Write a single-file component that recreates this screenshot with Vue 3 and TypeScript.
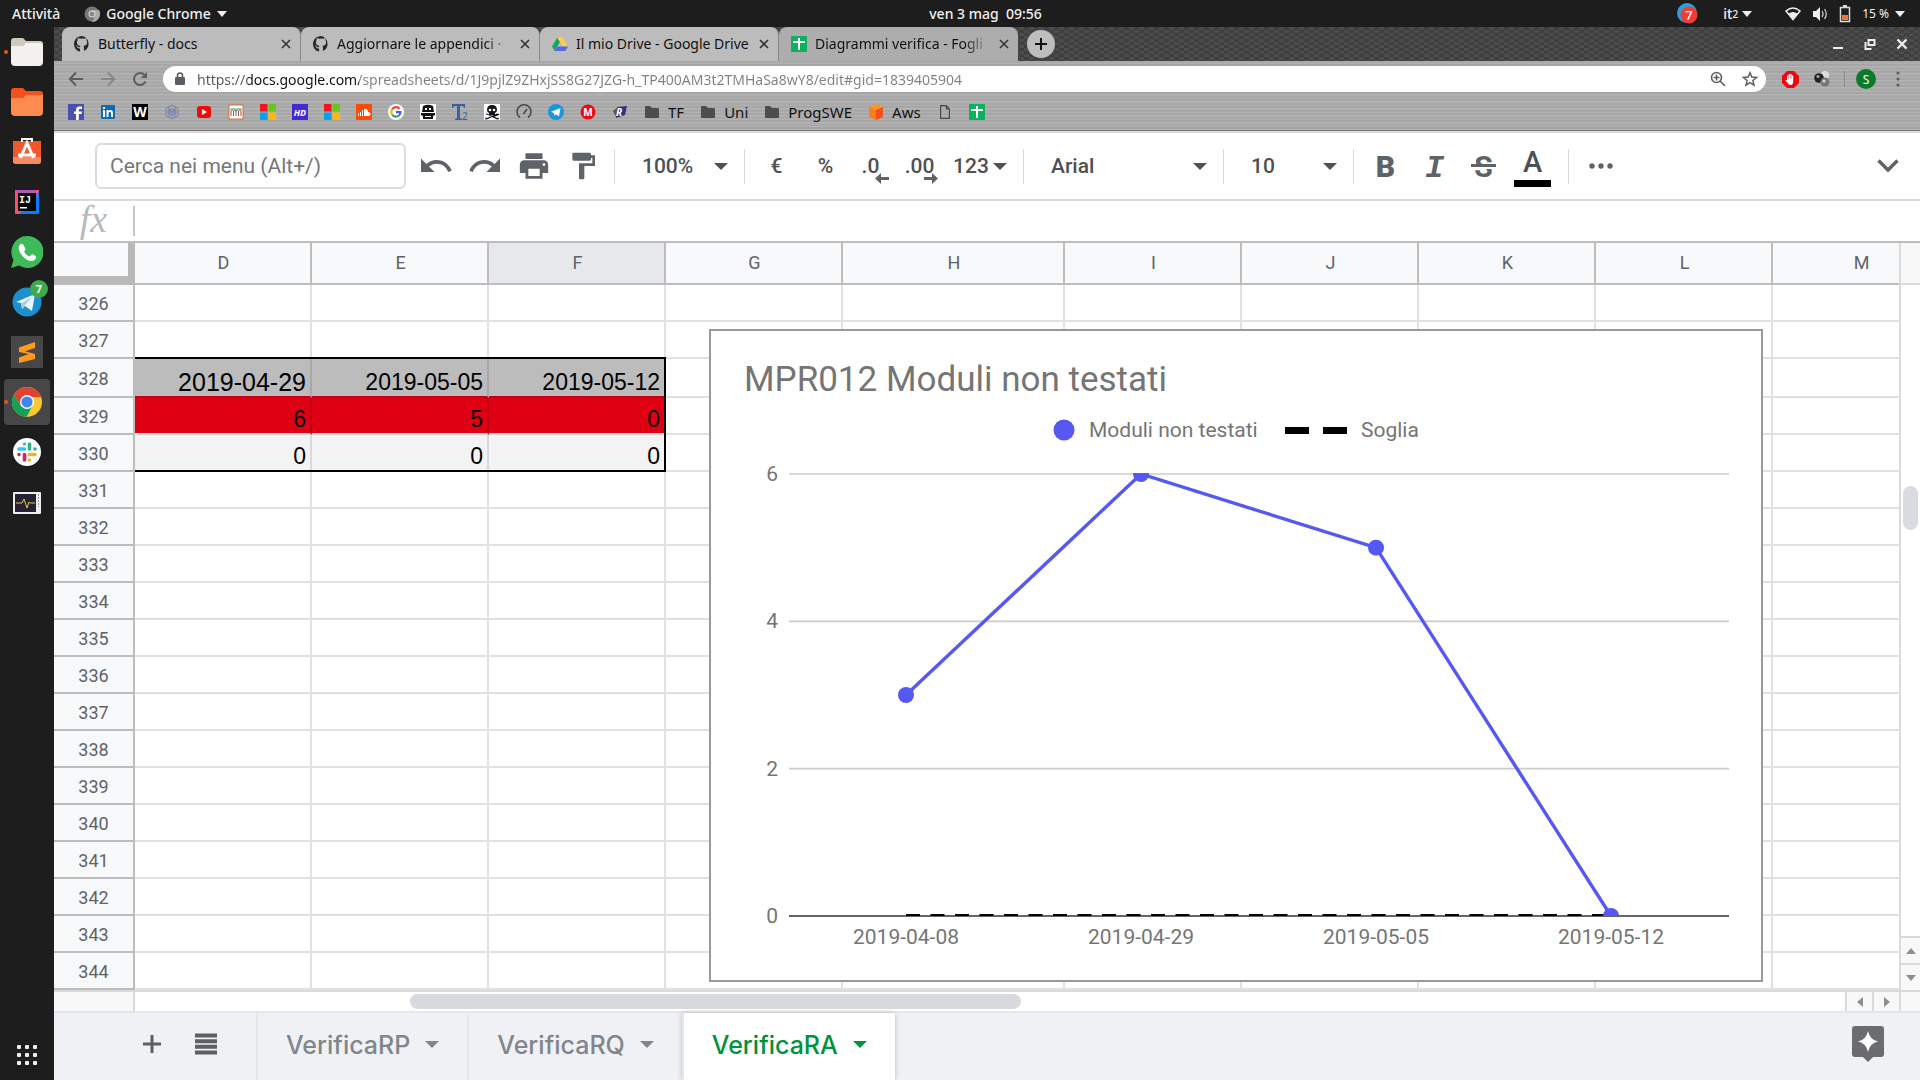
<script setup lang="ts">
import { ref } from 'vue'

interface Tab { title: string; icon: string; active?: boolean; fade?: boolean }
interface Bookmark { label?: string; name: string; icon: string }

const github = '<path fill="#24292e" d="M8 0C3.58 0 0 3.58 0 8c0 3.54 2.29 6.53 5.47 7.59.4.07.55-.17.55-.38v-2.8c-2.2.5-2.7-.6-2.8-1.1-.1-.3-.6-1-.9-1.2-.3-.1-.7-.5 0-.5.7 0 1.200.6 1.300.8.7 1.200 1.900.9 2.400.7.1-.5.3-.9.5-1.100-1.800-.2-3.600-.9-3.600-3.900 0-.9.3-1.600.8-2.100-.1-.2-.4-1 .1-2.100 0 0 .7-.2 2.200.8a7.500 7.500 0 0 1 4 0c1.500-1 2.200-.8 2.200-.8.4 1.100.2 1.900.1 2.100.5.6.8 1.300.8 2.100 0 3.100-1.900 3.700-3.700 3.900.3.3.5.7.5 1.500v2.900c0 .2.1.5.6.4A8 8 0 0 0 8 0z"/>'
const drive = '<path fill="#11a861" d="M5.300 1.500 8 6.100 2.700 15 0 10.600z"/><path fill="#ffcf48" d="M5.300 1.500h5.300L16 10.600h-5.300z"/><path fill="#5b63e8" d="M5.300 10.600H16L13.300 15H2.700z"/>'
const sheet = '<rect width="16" height="16" rx="1" fill="#0bb15d"/><path fill="#fff" d="M7 2h2v3h5v2H9v7H7V7H2V5h5z"/>'
const folder = '<path fill="#4d4d4d" d="M1 3q0-1 1-1h4l2 2h6q1 0 1 1v8q0 1-1 1H2q-1 0-1-1z"/>'
const windows = '<path fill="#f0141e" d="M0 0h7.500v7.500H0z"/><path fill="#62c81e" d="M8.500 0H16v7.500H8.500z"/><path fill="#0d9fea" d="M0 8.500h7.500V16H0z"/><path fill="#ffb900" d="M8.500 8.500H16V16H8.500z"/>'

const tabs: Tab[] = [
  { title: 'Butterfly - docs', icon: github },
  { title: 'Aggiornare le appendici ·', icon: github, fade: true },
  { title: 'Il mio Drive - Google Drive', icon: drive },
  { title: 'Diagrammi verifica - Fogli', icon: sheet, active: true, fade: true },
]

const bookmarks: Bookmark[] = [
  { name: 'Facebook', icon: '<rect width="16" height="16" fill="#4b4fb3"/><path fill="#fff" d="M8 16V10H6V7.500h2V6q0-3.500 3.500-3.500H14V5h-2q-1.200 0-1.200 1.200v1.300H14L13.600 10h-2.800v6z"/>' },
  { name: 'LinkedIn', icon: '<rect x="1" y="1" width="14" height="14" rx="1" fill="#0b6bb5"/><path fill="#fff" d="M3 6h2v7H3zM3 3h2v2H3zM6.500 6h2v1q2-2 4 0 .5.7.5 2v4h-2V9.500q0-1.700-1.200-1.700T8.500 9.500V13h-2z"/>' },
  { name: 'Wikipedia', icon: '<rect width="16" height="16" fill="#000"/><text x="8" y="13" text-anchor="middle" font-size="14" font-weight="700" fill="#fff">W</text>' },
  { name: 'Moodle', icon: '<g fill="none" stroke="#7b82ad" stroke-width="1"><path d="M8 1l6 3.500v7L8 15l-6-3.500v-7zM4 5l4 2.500L12 5M8 7.500V15M5 2.500v11M11 2.500v11M2 8h12"/><circle cx="8" cy="8" r="3"/></g>' },
  { name: 'YouTube', icon: '<rect x="1" y="2" width="14" height="12" rx="3" fill="#f20a0a"/><path fill="#fff" d="M6 5l5 3-5 3z"/>' },
  { name: 'Math', icon: '<rect x="1" y="1" width="14" height="14" fill="#fff" stroke="#f0652b"/><path fill="none" stroke="#7c5f5a" d="M3 12V7q1.500-2 2.500 0v5M5.500 7q1.500-2 2.500 0v5M8 7q1.500-2 2.500 0v5M10.500 7Q12 5 13 7v5"/><path stroke="#3ba55d" d="M2 5h12"/>' },
  { name: 'Outlook', icon: windows },
  { name: 'HD', icon: '<rect width="16" height="16" fill="#4428d8"/><text x="8" y="12" text-anchor="middle" font-size="9" font-weight="700" font-style="italic" fill="#fff">HD</text>' },
  { name: 'Microsoft', icon: windows },
  { name: 'SoundCloud', icon: '<rect width="16" height="16" fill="#ff4a08"/><path stroke="#fff" d="M2.500 9v3M4.500 8v4M6.500 6v6"/><path fill="#fff" d="M8 5q3.500-1 4 3 2.500 0 2.500 2T12.500 12H8z"/>' },
  { name: 'Google', icon: '<circle cx="8" cy="8" r="8" fill="#fff"/><g fill="none" stroke-width="2.200"><path stroke="#ea4335" d="M4 5.500a4.600 4.600 0 0 1 7.500-.8"/><path stroke="#fbbc05" d="M4 5.500a4.600 4.600 0 0 0 0 5"/><path stroke="#34a853" d="M4 10.500a4.600 4.600 0 0 0 7 1"/><path stroke="#4d5cf0" d="M11 11.500a4.600 4.600 0 0 0 1.500-3.300H8"/></g>' },
  { name: 'Pirata', icon: '<rect width="16" height="16" fill="#fff"/><path fill="#111" d="M3 2q5-2.500 10 0l1 6H2z"/><path fill="#fff" d="M5 4h2v2H5zM9 4h2v2H9z"/><path fill="#111" d="M1 9h14v2l-2 1v3H3v-3l-2-1z"/><path fill="#fff" d="M5 12h6v1H5z"/>' },
  { name: 'Traduttore', icon: '<path fill="#3b62a0" d="M0 0h13v4h-1l-1-2H8v12l2 1v1H3v-1l2-1V2H2L1 4H0z"/><text x="10" y="16" font-size="10" fill="#3b62a0">2</text>' },
  { name: 'Teschio', icon: '<rect width="16" height="16" fill="#fff"/><path fill="#14141c" d="M3 6q0-5 5-5t5 5q0 2-2 3v2H5V9Q3 8 3 6zM1 10l2-.5 10 4.500 2-.5-.5 2-2-.2L8 13l-4.500 2.300-2 .2-.5-2 2 .5 10-4.500 2 .5v1l-5 2z"/><circle cx="6" cy="6" r="1.300" fill="#fff"/><circle cx="10" cy="6" r="1.300" fill="#fff"/>' },
  { name: 'Speedtest', icon: '<path fill="none" stroke="#4a4a50" stroke-width="1.600" d="M4 13.500a7 7 0 1 1 8 0M7.500 10 11 5"/>' },
  { name: 'Telegram', icon: '<circle cx="8" cy="8" r="8" fill="#1897dc"/><path fill="#fff" d="M3 7.800 12.500 4 11 12.500 7.800 10.300 6.300 12 6 9.300z"/>' },
  { name: 'Mega', icon: '<circle cx="8" cy="8" r="7.500" fill="#ee0a12"/><text x="8" y="12" text-anchor="middle" font-size="10" font-weight="700" fill="#fff">M</text>' },
  { name: 'Risorse', icon: '<path fill="#3d2d7c" d="M5 3l10-1-2 9-9 3z"/><path fill="#555" d="M1 7l5-4-2 10z"/><text x="4" y="12" font-size="10" font-weight="700" font-style="italic" fill="#fff">R</text>' },
  { name: 'TF', label: 'TF', icon: folder },
  { name: 'Uni', label: 'Uni', icon: folder },
  { name: 'ProgSWE', label: 'ProgSWE', icon: folder },
  { name: 'Aws', label: 'Aws', icon: '<path fill="#ff9422" d="M8 0l7 3-7 3-7-3z"/><path fill="#fb7d1c" d="M1 3l7 3v10l-7-3z"/><path fill="#f4511e" d="M15 3 8 6v10l7-3z"/>' },
  { name: 'Pagina', icon: '<path fill="none" stroke="#4a4a4a" stroke-width="1.200" d="M3.600 1.600h5.800l3 3.400v9.400H3.600zM9.400 1.600V5h3"/>' },
  { name: 'Fogli', icon: sheet },
]

const dock = [
  { name: 'File', dot: true, icon: '<path fill="#cfc8bc" d="M0 5q0-3 3-3h9l3 3h14q3 0 3 3v18H0z"/><path fill="#f3f1ee" d="M0 10h12l3-3h14q3 0 3 3v16q0 4-4 4H4q-4 0-4-4z"/>' },
  { name: 'Cartella', icon: '<path fill="#f2511b" d="M0 5q0-3 3-3h9l3 3h14q3 0 3 3v18H0z"/><path fill="#fd8a4e" d="M0 12h12l3-3h17v17q0 4-4 4H4q-4 0-4-4z"/>' },
  { name: 'Ubuntu Software', icon: '<path fill="#f2572b" d="M2 5h28v20q0 3-3 3H5q-3 0-3-3z"/><path fill="#f58a66" d="M2 21h28v4q0 3-3 3H5q-3 0-3-3z"/><path fill="none" stroke="#fff" stroke-width="2" d="M11 6V3h10v3"/><path fill="none" stroke="#fff" stroke-width="3" d="M9.500 22 16 7l6.500 15M7 19h18"/>' },
  { name: 'IntelliJ IDEA', icon: '<path fill="#f84f6e" d="M4 4h24v24H4z"/><path fill="#087cfa" d="M28 6v22H8z"/><path fill="#9a5bd4" d="M4 4h20l4 6-12 8z" opacity=".7"/><path fill="#050505" d="M7 7h18v18H7z"/><text x="8" y="17" font-size="10" font-weight="700" fill="#fff" font-family="Liberation Mono">IJ</text><path fill="#fff" d="M9 21h7v1.500H9z"/>' },
  { name: 'WhatsApp', icon: '<path fill="#3dbb58" d="M16 0a16 16 0 1 1-8 29.500L0 32l2.500-8A16 16 0 0 1 16 0z"/><path fill="#fff" d="M8 10q2-4 4.500-1l2 4q0 1.500-1.500 2.500 2 4 5.500 5l2-2q1-.8 4 1.500 1.500 1.500-.5 3.500-3.500 3.500-10-1Q6.500 16 8 10z"/>' },
  { name: 'Telegram', badge: '7', icon: '<circle cx="16" cy="16" r="14.500" fill="#1c8fcf"/><path fill="#e9f4fb" d="M5 16 24 8l-3 17-7-5-3 3-1-6z"/><path fill="#aac9dc" d="M11 17l10-6-7 8-3 4z"/>' },
  { name: 'Sublime Text', icon: '<rect width="32" height="32" rx="1" fill="#474747"/><path fill="#ff9a1f" d="M8 11.500 24 6v6l-10 3.300L24 18v5L8 27v-5.500L18 18 8 16z"/>' },
  { name: 'Google Chrome', dot: true, active: true, icon: '<circle cx="16" cy="16" r="15" fill="#fbc92f"/><path fill="#de4335" d="M3 8.500a15 15 0 0 1 26 0q1 1.500 1.300 2.500H16L9.700 19.500z"/><path fill="#12a05c" d="M3 8.500 9.700 19.500 16 23l-3 7.700A15 15 0 0 1 3 8.500z"/><path fill="#12a05c" d="M21 20.500l-5.500 10.400-3-.6L15 23z"/><circle cx="16" cy="16" r="7" fill="#fff"/><circle cx="16" cy="16" r="5.600" fill="#3f85f4"/>' },
  { name: 'Slack', icon: '<circle cx="16" cy="16" r="14" fill="#fff"/><g stroke-width="3.600" stroke-linecap="round"><path stroke="#36c5f0" d="M8 13h5.500M13.500 8h0"/><path stroke="#2eb67d" d="M18.500 8v5M24 13h0"/><path stroke="#ecb22e" d="M18.500 18.500H24M18.500 24h0"/><path stroke="#e01e5a" d="M13.500 18.500V24M8 18.500h0"/></g>' },
  { name: 'Monitor di sistema', icon: '<rect x="2" y="6" width="28" height="22" rx="1" fill="#efefef"/><path fill="#272136" d="M4 8h21v18H4z"/><path fill="none" stroke="#d9cb3c" d="M5 17h6l2-4 3 9 2-6 1 1h5"/><path stroke="#999" stroke-dasharray="2 1" d="M27.500 8v13"/>' },
]

const columns = [
  { name: 'D', w: 177 }, { name: 'E', w: 177 }, { name: 'F', w: 177 }, { name: 'G', w: 177 }, { name: 'H', w: 222 },
  { name: 'I', w: 177 }, { name: 'J', w: 177 }, { name: 'K', w: 177 }, { name: 'L', w: 177 }, { name: 'M', w: 177 },
]
const rows = Array.from({ length: 19 }, (_, i) => 326 + i)
const data: Record<number, string[]> = {
  328: ['2019-04-29', '2019-05-05', '2019-05-12'],
  329: ['6', '5', '0'],
  330: ['0', '0', '0'],
}
const cell = (row: number, col: number): string => data[row]?.[col] ?? ''

const plot = { left: 78, right: 1018, top: 143, bottom: 585 }
const series = [
  { date: '2019-04-08', value: 3 }, { date: '2019-04-29', value: 6 },
  { date: '2019-05-05', value: 5 }, { date: '2019-05-12', value: 0 },
]
const px = (i: number): number => plot.left + 117 + i * 235
const py = (v: number): number => plot.bottom - (v * (plot.bottom - plot.top)) / 6
const line = series.map((p, i) => `${px(i)},${py(p.value)}`).join(' ')

const sheets = ['VerificaRP', 'VerificaRQ', 'VerificaRA']
const current = ref('VerificaRA')
const url = ref('https://docs.google.com/spreadsheets/d/1J9pjlZ9ZHxjSS8G27JZG-h_TP400AM3t2TMHaSa8wY8/edit#gid=1839405904')
</script>

<template>
  <div class="desktop">
    <header class="panel">
      <div class="panel-side">
        <button class="panel-btn">Attività</button>
        <button class="panel-btn app-menu">
          <svg width="16" height="18" viewBox="0 0 16 18"><circle cx="8" cy="9" r="7.500" fill="#777" /><path fill="#aaa" d="M8 5h7a8 8 0 0 1-7 12l3-6z" /><circle cx="8" cy="9" r="3.500" fill="#ddd" /><circle cx="8" cy="9" r="2.500" fill="#888" /></svg>
          Google Chrome
          <svg width="10" height="6" viewBox="0 0 10 6"><path fill="#eee" d="M0 0h10L5 6z" /></svg>
        </button>
      </div>
      <time class="clock">ven 3 mag&nbsp; 09:56</time>
      <div class="panel-side right">
        <svg width="22" height="22" viewBox="0 0 22 22"><circle cx="10" cy="10" r="10" fill="#2ba0db" /><circle cx="12" cy="12" r="8.500" fill="#f23c34" /><text x="12" y="17" text-anchor="middle" font-size="13" fill="#fff">7</text></svg>
        <button class="panel-btn lang">it<small>2</small><svg width="10" height="6" viewBox="0 0 10 6"><path fill="#eee" d="M0 0h10L5 6z" /></svg></button>
        <svg width="16" height="14" viewBox="0 0 16 14"><path fill="none" stroke="#eee" stroke-width="1.500" d="M1 4q7-6 14 0L8 12.500z" /><path fill="#eee" d="M3.500 6.500q4.500-3 9 0L8 12.500z" /></svg>
        <svg width="16" height="16" viewBox="0 0 16 16"><path fill="#eee" d="M1 5h3l4-4v14l-4-4H1z" /><path fill="none" stroke="#ccc" stroke-width="1.300" d="M10 5q2 3 0 6M12.500 3q3.500 5 0 10" /></svg>
        <svg width="12" height="18" viewBox="0 0 12 18"><path fill="none" stroke="#ddd" stroke-width="1.500" d="M1.500 2.500h9v14h-9z" /><path fill="#ddd" d="M4 0h4v2H4z" /><path fill="#f0733c" d="M3 10h6v5H3z" /></svg>
        <button class="panel-btn power">15 % <svg width="10" height="6" viewBox="0 0 10 6"><path fill="#eee" d="M0 0h10L5 6z" /></svg></button>
      </div>
    </header>

    <div class="workspace">
      <nav class="dock" aria-label="Preferiti">
        <button v-for="app in dock" :key="app.name" class="dock-item" :class="{ active: app.active }" :aria-label="app.name">
          <i v-if="app.dot" class="dot"></i>
          <svg width="32" height="32" viewBox="0 0 32 32" v-html="app.icon"></svg>
          <b v-if="app.badge" class="badge">{{ app.badge }}</b>
        </button>
        <button class="dock-item apps" aria-label="Mostra applicazioni">
          <svg width="22" height="22" viewBox="0 0 22 22" fill="#eee"><template v-for="r in 3" :key="r"><rect v-for="c in 3" :key="c" :x="c * 8 - 7" :y="r * 8 - 7" width="4" height="4" rx="1" /></template></svg>
        </button>
      </nav>

      <main class="window">
        <div class="tabstrip">
          <div class="tabs" role="tablist">
            <div v-for="t in tabs" :key="t.title" class="tab" :class="{ active: t.active }" role="tab">
              <svg width="16" height="16" viewBox="0 0 16 16" v-html="t.icon"></svg>
              <span class="tab-title" :class="{ fade: t.fade }">{{ t.title }}</span>
              <button class="tab-close" aria-label="Chiudi scheda"><svg width="10" height="10" viewBox="0 0 10 10"><path stroke="#333" stroke-width="1.600" d="M1 1l8 8M9 1 1 9" /></svg></button>
            </div>
          </div>
          <button class="new-tab" aria-label="Nuova scheda"><svg width="12" height="12" viewBox="0 0 12 12"><path stroke="#111" stroke-width="2" d="M6 0v12M0 6h12" /></svg></button>
          <div class="window-controls">
            <button aria-label="Riduci"><svg width="12" height="12" viewBox="0 0 12 12"><path fill="#eee" d="M1 9h10v2H1z" /></svg></button>
            <button aria-label="Ripristina"><svg width="12" height="12" viewBox="0 0 12 12"><path fill="none" stroke="#eee" stroke-width="2" d="M4.500 2h6v5h-6zM1.500 4v7h6" /></svg></button>
            <button aria-label="Chiudi"><svg width="12" height="12" viewBox="0 0 12 12"><path stroke="#eee" stroke-width="2.400" d="M1.500 1.500l9 9M10.500 1.500l-9 9" /></svg></button>
          </div>
        </div>

        <div class="chrome">
          <div class="nav">
            <button class="nav-btn" aria-label="Indietro"><svg width="16" height="16" viewBox="0 0 16 16"><path fill="none" stroke="#5b5e64" stroke-width="2" d="M15 8H2M8 1.500 1.800 8 8 14.500" /></svg></button>
            <button class="nav-btn" aria-label="Avanti"><svg width="16" height="16" viewBox="0 0 16 16"><path fill="none" stroke="#85878b" stroke-width="2" d="M1 8h13M8 1.500 14.200 8 8 14.500" /></svg></button>
            <button class="nav-btn" aria-label="Ricarica"><svg width="16" height="16" viewBox="0 0 16 16"><path fill="none" stroke="#5b5e64" stroke-width="2" d="M13.500 10.500A6 6 0 1 1 12.500 4" /><path fill="#5b5e64" d="M15 1v6H9z" /></svg></button>
            <div class="omnibox">
              <svg width="10" height="14" viewBox="0 0 10 14"><path fill="#5b5e64" d="M1 5h8q1 0 1 1v6q0 1-1 1H1q-1 0-1-1V6q0-1 1-1z" /><path fill="none" stroke="#5b5e64" stroke-width="1.600" d="M2.500 6V3.500a2.500 2.500 0 0 1 5 0V6" /></svg>
              <input v-model="url" class="url" type="text" aria-label="Barra degli indirizzi" spellcheck="false" />
              <button class="nav-btn" aria-label="Zoom"><svg width="16" height="16" viewBox="0 0 16 16"><path fill="none" stroke="#5b5e64" stroke-width="1.600" d="M10 10l5 5M3.500 6.500h6M6.500 3.500v6" /><circle cx="6.500" cy="6.500" r="5" fill="none" stroke="#5b5e64" stroke-width="1.600" /></svg></button>
              <button class="nav-btn" aria-label="Aggiungi ai Preferiti"><svg width="16" height="16" viewBox="0 0 16 16"><path fill="none" stroke="#5b5e64" stroke-width="1.500" d="M8 1.800l1.800 4.300 4.700.4-3.600 3 1.100 4.600L8 11.600l-4 2.500 1.100-4.600-3.600-3 4.700-.4z" /></svg></button>
            </div>
            <div class="extensions">
              <button class="nav-btn" aria-label="AdBlock"><svg width="17" height="17" viewBox="0 0 17 17"><path fill="#f00512" d="M5 0h7l5 5v7l-5 5H5l-5-5V5z" /><path fill="#fff" d="M5 8V4.500h1.400V8h.3V3H8v4.500h.3V3h1.300v5h.3V4.500h1.300v6Q11 14 8.500 14q-2 0-3-2L3.500 9.500q.5-1 1.500 0z" /></svg></button>
              <button class="nav-btn" aria-label="Estensione"><svg width="16" height="16" viewBox="0 0 16 16"><circle cx="11" cy="4" r="4" fill="#ddd" /><circle cx="5" cy="7" r="4.800" fill="#222" /><circle cx="4" cy="5.500" r="1.500" fill="#aaa" /><circle cx="11" cy="11" r="4.500" fill="#777" /><circle cx="10" cy="10" r="1.500" fill="#ddd" /></svg></button>
              <i class="nav-sep"></i>
              <button class="avatar">S</button>
              <button class="nav-btn" aria-label="Menu"><svg width="4" height="16" viewBox="0 0 4 16" fill="#5b5e64"><circle cx="2" cy="2" r="1.600" /><circle cx="2" cy="8" r="1.600" /><circle cx="2" cy="14" r="1.600" /></svg></button>
            </div>
          </div>
          <nav class="bookmarks" aria-label="Preferiti">
            <a v-for="b in bookmarks" :key="b.name" href="#" class="bookmark" :aria-label="b.name"><svg width="16" height="16" viewBox="0 0 16 16" v-html="b.icon"></svg><span v-if="b.label">{{ b.label }}</span></a>
          </nav>
        </div>

        <div class="toolbar">
          <input class="search" type="text" placeholder="Cerca nei menu (Alt+/)" aria-label="Cerca nei menu" />
          <div class="group history">
            <button class="tool" aria-label="Annulla"><svg width="36" height="36" viewBox="0 0 24 24"><path d="M12.500 8c-2.650 0-5.050.99-6.900 2.600L2 7v9h9l-3.620-3.620c1.390-1.160 3.160-1.880 5.120-1.880 3.540 0 6.550 2.310 7.600 5.500l2.370-.78C21.080 11.030 17.150 8 12.500 8z" /></svg></button>
            <button class="tool" aria-label="Ripeti"><svg width="36" height="36" viewBox="0 0 24 24"><path d="M18.400 10.600C16.550 8.990 14.150 8 11.500 8c-4.650 0-8.580 3.030-9.960 7.220L3.900 16c1.050-3.190 4.050-5.500 7.600-5.500 1.950 0 3.730.72 5.120 1.880L13 16h9V7l-3.600 3.600z" /></svg></button>
            <button class="tool" aria-label="Stampa"><svg width="34" height="34" viewBox="0 0 24 24"><path d="M19 8H5c-1.660 0-3 1.340-3 3v6h4v4h12v-4h4v-6c0-1.660-1.340-3-3-3zm-3 11H8v-5h8v5zm3-7c-.55 0-1-.45-1-1s.45-1 1-1 1 .45 1 1-.45 1-1 1zm-1-9H6v4h12V3z" /></svg></button>
            <button class="tool" aria-label="Copia formato"><svg width="32" height="32" viewBox="0 0 24 24"><path d="M18 4V3c0-.55-.45-1-1-1H5c-.55 0-1 .45-1 1v4c0 .55.45 1 1 1h12c.55 0 1-.45 1-1V6h1v4H9v11c0 .55.45 1 1 1h2c.55 0 1-.45 1-1v-9h8V4h-3z" /></svg></button>
          </div>
          <i class="sep"></i>
          <label class="picker narrow"><select aria-label="Zoom"><option>100%</option></select><i class="caret"></i></label>
          <i class="sep"></i>
          <div class="group">
            <button class="tool">€</button>
            <button class="tool">%</button>
            <button class="tool decimals">.0<svg width="14" height="12" viewBox="0 0 14 12"><path d="M6 0v4h8v3H6v4L0 5.500z" /></svg></button>
            <button class="tool decimals">.00<svg width="14" height="12" viewBox="0 0 14 12"><path d="M8 0v4H0v3h8v4l6-5.500z" /></svg></button>
            <button class="tool formats">123<i class="caret"></i></button>
          </div>
          <i class="sep"></i>
          <label class="picker wide"><select aria-label="Carattere"><option>Arial</option></select><i class="caret"></i></label>
          <i class="sep"></i>
          <label class="picker narrow"><select aria-label="Dimensione"><option>10</option></select><i class="caret"></i></label>
          <i class="sep"></i>
          <div class="group">
            <button class="tool bold">B</button>
            <button class="tool italic">I</button>
            <button class="tool strike">S</button>
            <button class="tool color"><span>A</span></button>
          </div>
          <i class="sep"></i>
          <button class="tool more" aria-label="Altro"><svg width="24" height="6" viewBox="0 0 24 6"><circle cx="3" cy="3" r="2.700" /><circle cx="12" cy="3" r="2.700" /><circle cx="21" cy="3" r="2.700" /></svg></button>
          <button class="tool collapse" aria-label="Nascondi i menu"><svg width="22" height="14" viewBox="0 0 22 14"><path fill="none" stroke="#5f6368" stroke-width="3.400" d="M1.500 1.500 11 11l9.500-9.500" /></svg></button>
        </div>

        <div class="formula">
          <label for="fx" class="fx">fx</label>
          <input id="fx" type="text" />
        </div>

        <div class="grid-area">
          <div class="sheet">
            <table class="cells">
              <colgroup><col class="col-head" /><col v-for="c in columns" :key="c.name" :style="{ width: c.w + 'px' }" /></colgroup>
              <thead>
                <tr><td class="corner"></td><th v-for="c in columns" :key="c.name" scope="col" :class="{ sel: c.name === 'F' }">{{ c.name }}</th></tr>
              </thead>
              <tbody>
                <tr v-for="r in rows" :key="r" :class="'r' + r"><th scope="row">{{ r }}</th><td v-for="(c, i) in columns" :key="c.name" :class="{ range: i < 3 }">{{ cell(r, i) }}</td></tr>
              </tbody>
            </table>
            <div class="range-outline"></div>
            <svg class="chart" width="1054" height="653" viewBox="0 0 1050 649" role="img" aria-label="MPR012 Moduli non testati">
              <defs><clipPath id="plot"><rect :x="plot.left" :y="plot.top - 1" width="940" :height="plot.bottom - plot.top + 1" /></clipPath></defs>
              <text x="33" y="60" class="chart-title">MPR012 Moduli non testati</text>
              <circle cx="353" cy="99" r="10.500" fill="#5558f2" />
              <text x="378" y="106">Moduli non testati</text>
              <path stroke="#000" stroke-width="7" d="M574 99.500h24M612 99.500h24" />
              <text x="650" y="106">Soglia</text>
              <g v-for="v in [0, 2, 4, 6]" :key="v">
                <path :stroke="v ? '#ccc' : '#333'" stroke-width="1.700" :d="`M${plot.left} ${py(v)}H${plot.right}`" />
                <text x="67" :y="py(v) + 7" text-anchor="end">{{ v }}</text>
              </g>
              <g clip-path="url(#plot)">
                <path stroke="#000" stroke-width="4" stroke-dasharray="14 10.500" :d="`M${px(0)} ${py(0)}H${px(3)}`" />
                <polyline :points="line" fill="none" stroke="#5558f2" stroke-width="3.400" />
                <circle v-for="(p, i) in series" :key="p.date" :cx="px(i)" :cy="py(p.value)" r="8" fill="#5558f2" />
              </g>
              <text v-for="(p, i) in series" :key="p.date" :x="px(i)" y="613" text-anchor="middle">{{ p.date }}</text>
            </svg>
          </div>
          <div class="vscroll">
            <div class="vhead"></div>
            <div class="vtrack"><i class="vthumb"></i></div>
            <button aria-label="Scorri su"><svg width="10" height="6" viewBox="0 0 10 6"><path fill="#8e8e8e" d="M0 6h10L5 0z" /></svg></button>
            <button aria-label="Scorri giù"><svg width="10" height="6" viewBox="0 0 10 6"><path fill="#8e8e8e" d="M0 0h10L5 6z" /></svg></button>
          </div>
        </div>

        <div class="hscroll">
          <div class="hhead"></div>
          <div class="htrack"><i class="hthumb"></i></div>
          <button aria-label="Scorri a sinistra"><svg width="6" height="10" viewBox="0 0 6 10"><path fill="#8e8e8e" d="M6 0v10L0 5z" /></svg></button>
          <button aria-label="Scorri a destra"><svg width="6" height="10" viewBox="0 0 6 10"><path fill="#8e8e8e" d="M0 0v10l6-5z" /></svg></button>
          <div class="hend"></div>
        </div>

        <footer class="sheetbar">
          <button class="sheet-btn" aria-label="Aggiungi foglio"><svg width="18" height="18" viewBox="0 0 18 18"><path stroke="#5f6062" stroke-width="3" d="M9 0v18M0 9h18" /></svg></button>
          <button class="sheet-btn" aria-label="Tutti i fogli"><svg width="22" height="22" viewBox="0 0 22 22"><path stroke="#5f6062" stroke-width="4" d="M0 2.500h22M0 8.200h22M0 13.800h22M0 19.500h22" /></svg></button>
          <div class="sheet-tabs">
            <button v-for="s in sheets" :key="s" class="sheet-tab" :class="{ active: s === current }" @click="current = s">{{ s }}<i class="caret"></i></button>
          </div>
          <button class="explore" aria-label="Esplora"><svg width="32" height="36" viewBox="0 0 32 36"><path fill="#6a6c6f" d="M3 0h26q3 0 3 3v25q0 3-3 3h-8l-5 5-5-5H3q-3 0-3-3V3q0-3 3-3z" /><path fill="#fff" d="M16 5q2 9 10 10.500-8 1.500-10 10.500-2-9-10-10.500Q14 14 16 5z" /></svg></button>
        </footer>
      </main>
    </div>
  </div>
</template>

<style>
body { margin: 0; background: #1d1d1d; }
</style>

<style scoped>
* { box-sizing: border-box; }
button { border: 0; padding: 0; background: none; font: inherit; color: inherit; display: flex; align-items: center; justify-content: center; }
svg { display: block; flex: none; }
.desktop { min-height: 100vh; display: flex; flex-direction: column; font-family: "Noto Sans", "Open Sans", sans-serif; }
.panel { height: 27px; flex: none; display: flex; align-items: center; background: #1d1d1d; color: #f0f0f0; font-size: 14px; line-height: 20px; font-weight: 500; }
.panel-side { flex: 1; display: flex; align-items: center; padding-left: 12px; }
.app-menu { margin-left: 24px; gap: 6px; }
.clock { white-space: nowrap; padding-left: 54px; }
.right { justify-content: flex-end; gap: 11px; padding: 0 15px 0 0; }
.lang { margin: 0 22px 0 13px; }
.lang small { font-size: 10px; align-self: flex-end; margin-right: 4px; }
.power { gap: 6px; font-size: 12px; font-weight: 400; }

.workspace { flex: 1; display: flex; }
.dock { width: 54px; flex: none; background: #1d1d1d; display: flex; flex-direction: column; align-items: center; }
.dock-item { position: relative; width: 46px; height: 46px; margin: 2px 0; border-radius: 4px; flex: none; }
.dock-item.active { background: #474747; }
.apps { margin-top: auto; }
.dot { position: absolute; left: 0; top: 21px; width: 4px; height: 4px; border-radius: 2px; background: #e95420; }
.badge { position: absolute; right: 2px; top: 1px; width: 18px; height: 18px; border-radius: 9px; background: #3bab4b; color: #fff; font-size: 11px; line-height: 18px; }

.window { flex: 1; min-width: 0; display: flex; flex-direction: column; background: #fff; }
.tabstrip { height: 34px; display: flex; align-items: center; padding-left: 8px; background: repeating-conic-gradient(#4c4c4c 0 25%, #3f3f3f 0 50%) 0 0 / 10px 6px; }
.tabs { display: flex; align-self: stretch; }
.tab { width: 239px; display: flex; align-items: center; gap: 8px; padding: 0 8px 0 12px; border-radius: 8px 8px 0 0; border-right: 1px solid #888; background: #bcbcbc; font-size: 14px; color: #111; }
.tab.active { background: #adadad; border: 0; }
.tab-title { flex: 1; overflow: hidden; white-space: nowrap; line-height: 20px; }
.fade { mask-image: linear-gradient(to right, #000 85%, transparent); }
.tab-close { width: 12px; height: 16px; }
.new-tab { width: 28px; height: 28px; border-radius: 14px; background: #bdbdbd; margin-left: 9px; }
.window-controls { margin-left: auto; display: flex; padding-right: 2px; }
.window-controls button { width: 32px; height: 24px; }

.chrome { height: 72px; background: repeating-linear-gradient(#a9a9a9 0 2px, #b1b1b1 2px 3px, #a6a6a6 3px 5px, #b4b4b4 5px 6px, #acacac 6px 7px); border-bottom: 2px solid #dadbe1; box-shadow: inset 0 -1px #77777b; padding-top: 5px; }
.nav { display: flex; align-items: center; padding-left: 6px; }
.nav-btn { width: 32px; height: 26px; }
.omnibox { flex: 1; height: 26px; margin-left: 7px; display: flex; align-items: center; background: #fff; border-radius: 13px; padding-left: 12px; }
.url { flex: 1; min-width: 0; height: 26px; border: 0; outline: 0; padding: 0; margin-left: 12px; font: 14px "Noto Sans", sans-serif; color: transparent; background: linear-gradient(to right, #55585c 0 51px, #111 51px 162px, #7d8186 162px) text; }
.extensions { display: flex; align-items: center; padding: 0 6px 0 8px; }
.nav-sep { width: 1px; height: 16px; margin: 0 11px 0 6px; background: #8a8a8a; }
.avatar { width: 20px; height: 20px; border-radius: 10px; background: #0a7a2a; color: #fff; font-size: 12px; margin-right: 6px; }
.bookmarks { display: flex; gap: 16px; align-items: center; height: 40px; padding-left: 14px; }
.bookmark { display: flex; align-items: center; gap: 8px; color: #111; text-decoration: none; font-size: 15px; line-height: 20px; }

.toolbar { height: 68px; border-bottom: 2px solid #dadce0; display: flex; align-items: center; padding-left: 41px; font: 500 21px Roboto, sans-serif; color: #4e5054; }
.search { width: 311px; height: 46px; border: 2px solid #dadce0; border-radius: 6px; padding: 0 13px; font: 21px Roboto, sans-serif; color: #777; }
.search::placeholder { color: #777; }
.group { display: flex; margin: 0 7px; }
.history { margin: 0 3px 0 5px; }
.tool { position: relative; width: 49px; height: 46px; fill: #5f6368; }
.sep { width: 1px; height: 35px; background: #dadce0; margin-left: 4px; }
.picker { position: relative; display: block; width: 125px; }
.picker.wide { width: 195px; }
.picker select { appearance: none; width: 100%; height: 40px; border: 0; background: none; font: inherit; color: inherit; padding: 0 0 0 27px; }
.caret { border: 7px solid transparent; border-top-color: currentColor; border-bottom: 0; }
.picker .caret { position: absolute; right: 12px; top: 17px; }
.decimals { padding-right: 8px; }
.decimals svg { position: absolute; right: 10px; bottom: 4px; }
.formats { width: 64px; gap: 4px; }
.bold { font-weight: 900; font-size: 30px; color: #5f6368; }
.italic { font: italic 700 32px "Liberation Mono", monospace; padding-top: 4px; color: #5f6368; }
.strike { font-weight: 700; font-size: 30px; color: #5f6368; }
.strike::after { content: ""; position: absolute; left: 12px; top: 21px; width: 25px; height: 3px; background: #5f6368; border-bottom: 2px solid #fff; }
.color span { width: 37px; border-bottom: 7px solid #000; line-height: 35px; font-size: 29px; }
.more { margin-left: 7px; }
.collapse { margin-left: auto; margin-right: 8px; }

.formula { height: 40px; display: flex; align-items: center; }
.fx { width: 79px; text-align: center; font: italic 38px/36px "Liberation Serif", serif; color: #b8b9bc; padding-bottom: 5px; }
.formula input { flex: 1; height: 30px; border: 0; border-left: 2px solid #c4c5c8; outline: 0; }

.grid-area { display: flex; border-top: 2px solid #bdbdbd; border-bottom: 2px solid #dadada; }
.sheet { position: relative; flex: 1; min-width: 0; overflow: hidden; }
.cells { width: 1896px; table-layout: fixed; border-collapse: separate; border-spacing: 0; font-family: Roboto, sans-serif; }
.col-head { width: 81px; }
.cells th { font-weight: 400; font-size: 18px; color: #5f6368; background: #f8f9fb; border: 0 solid #bdbdbd; border-width: 0 2px 2px 0; padding: 2px 0 0; height: 37px; }
.cells thead th { height: 42px; padding: 0 0 2px 2px; }
.cells th.sel { background: #e7e8ec; }
.corner.corner { background: #f8f9fb; border: 0 solid #b9b9b9; border-width: 0 7px 9px 0; }
.cells td { border: 0 solid #e1e1e1; border-width: 0 2px 2px 0; padding: 0 4px 1px; vertical-align: bottom; text-align: right; color: #000; font: 23px/26px "Liberation Sans", sans-serif; }
.r328 th { height: 39px; }
.r328 .range { background: #bcbcbc; border-color: #a8a8a8; border-bottom-color: #c40015; }
.r328 .range:nth-child(2) { font-size: 25px; }
.r329 .range { background: #e00013; border-color: #c40015; border-bottom-color: #dadada; }
.r330 .range { background: #f3f3f3; border-color: #dadada; }
.range-outline { position: absolute; left: 81px; top: 114px; width: 531px; height: 115px; border: 2px solid #000; border-left: 0; pointer-events: none; }
.chart { position: absolute; left: 655px; top: 86px; border: 2px solid #999; background: #fff; font: 21px Roboto, sans-serif; fill: #757575; }
.chart-title { font-size: 35px; }

.vscroll { width: 21px; border-left: 2px solid #dadada; display: flex; flex-direction: column; }
.vhead { height: 42px; border-bottom: 2px solid #dadada; background: #f8f8f8; }
.vtrack { flex: 1; padding: 201px 2px 0; }
.vthumb { display: block; height: 44px; border-radius: 8px; background: #dadbe1; }
.vscroll button { height: 27px; border-top: 2px solid #dadada; background: #f8f8f8; }
.hscroll { height: 19px; display: flex; }
.hhead { width: 81px; background: #f8f8f8; border-right: 2px solid #dadada; }
.htrack { flex: 1; padding: 2px 0 0 275px; }
.hthumb { display: block; width: 611px; height: 15px; border-radius: 8px; background: #d9dae0; }
.hscroll button { width: 27px; border-left: 2px solid #dadada; background: #f8f8f8; }
.hend { width: 21px; border-left: 2px solid #dadada; background: #f8f8f8; }

.sheetbar { flex: 1; min-height: 69px; display: flex; background: #f0f1f4; border-top: 2px solid #e6e7ea; padding: 0 36px 0 71px; font: 500 25px Inter, sans-serif; color: #80868b; }
.sheet-btn { width: 54px; height: 62px; }
.sheet-tabs { display: flex; margin-left: 23px; }
.sheet-tab { height: 67px; padding: 0 28px 4px; gap: 15px; border-left: 2px solid #e6e7ea; }
.sheet-tab.active { background: #fff; color: #00933c; box-shadow: 0 0 5px #bbb; }
.explore { margin-left: auto; height: 62px; }
</style>
